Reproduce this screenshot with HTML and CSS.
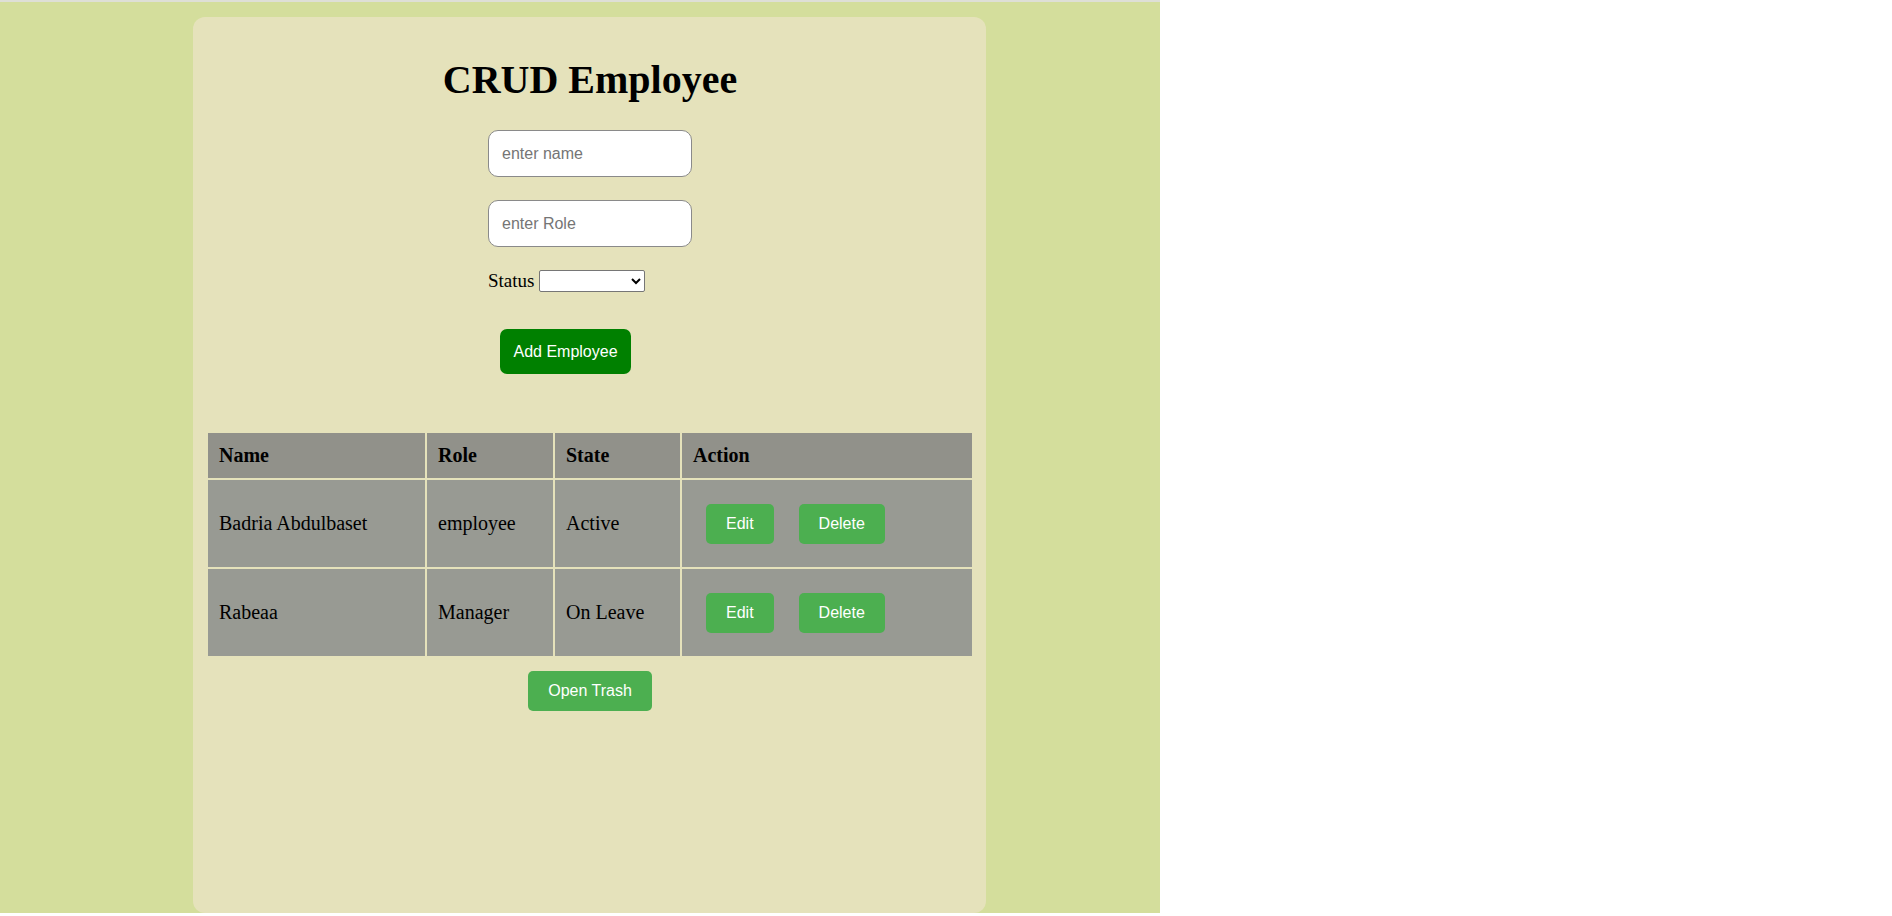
FILE: index.html
```html
<!DOCTYPE html>
<html>
<head>
<meta charset="utf-8">
<title>CRUD Employee</title>
<link rel="stylesheet" href="styles.css">
</head>
<body>
<div class="page">
  <div class="card">
    <h1 class="title">CRUD Employee</h1>
    <div class="form">
      <input class="field" type="text" placeholder="enter name">
      <input class="field" type="text" placeholder="enter Role">
      <div class="status-row">
        <label class="status-label">Status</label>
        <select class="status-select"><option></option><option>Active</option><option>On Leave</option></select>
      </div>
      <button class="add-btn">Add Employee</button>
    </div>
    <table class="emp-table">
      <thead>
        <tr>
          <th class="c-name">Name</th>
          <th class="c-role">Role</th>
          <th class="c-state">State</th>
          <th class="c-action">Action</th>
        </tr>
      </thead>
      <tbody>
        <tr>
          <td>Badria Abdulbaset</td>
          <td>employee</td>
          <td>Active</td>
          <td class="action-cell"><div class="actions"><button class="btn">Edit</button><button class="btn">Delete</button></div></td>
        </tr>
        <tr>
          <td>Rabeaa</td>
          <td>Manager</td>
          <td>On Leave</td>
          <td class="action-cell"><div class="actions"><button class="btn">Edit</button><button class="btn">Delete</button></div></td>
        </tr>
      </tbody>
    </table>
    <div class="trash-wrap"><button class="btn">Open Trash</button></div>
  </div>
</div>
</body>
</html>
```

FILE: styles.css
```css
html, body {
  margin: 0;
  padding: 0;
  background: #ffffff;
}
body {
  font-family: "Liberation Serif", "Times New Roman", serif;
  font-size: 20px;
  color: #000;
}
.page {
  width: 1160px;
  height: 911px;
  background: #d4de9c;
  border-top: 2px solid #dedfd6;
  display: flow-root;
}
.card {
  margin: 15px 0 0 193px;
  width: 793px;
  height: 896px;
  box-sizing: border-box;
  padding: 40px 12px 0 13px;
  background: #e5e2bb;
  border-radius: 12px;
}
.title {
  margin: 0;
  font-size: 40px;
  line-height: 46px;
  font-weight: bold;
  text-align: center;
}
.form {
  width: 204px;
  margin: 27px auto 0;
}
.field {
  display: block;
  box-sizing: border-box;
  width: 204px;
  height: 47px;
  margin: 0 0 23px;
  padding: 0 13px;
  border: 1px solid #8a8a8a;
  border-radius: 10px;
  background: #fff;
  font-family: "Liberation Sans", Arial, sans-serif;
  font-size: 16px;
  color: #000;
}
.field::placeholder {
  color: #757575;
}
.status-row {
  display: flex;
  align-items: center;
  gap: 5px;
  height: 22px;
}
.status-label {
  font-size: 19px;
}
.status-select {
  width: 106px;
  height: 22px;
  box-sizing: border-box;
  border: 1px solid #767676;
  border-radius: 2px;
  background: #fff;
  font-family: "Liberation Sans", Arial, sans-serif;
  font-size: 13px;
}
.add-btn {
  display: block;
  margin: 37px 0 0 12px;
  width: 131px;
  height: 45px;
  padding: 0;
  border: none;
  border-radius: 7px;
  background: #008000;
  color: #fff;
  font-family: "Liberation Sans", Arial, sans-serif;
  font-size: 16px;
}
.emp-table {
  margin-top: 57px;
  width: 768px;
  border-spacing: 2px;
  table-layout: fixed;
}
.emp-table th,
.emp-table td {
  box-sizing: border-box;
  text-align: left;
  padding: 0 11px;
  vertical-align: middle;
  line-height: 23px;
}
.emp-table th {
  height: 45px;
  background: #91918a;
  font-weight: bold;
}
.emp-table td {
  height: 87px;
  background: #989a93;
}
.c-name { width: 217px; }
.c-role { width: 126px; }
.c-state { width: 125px; }
.c-action { width: 290px; }
.emp-table td.action-cell {
  padding-left: 24px;
}
.actions {
  display: flex;
  gap: 25px;
}
.btn {
  height: 40px;
  padding: 0 20px;
  border: none;
  border-radius: 5px;
  background: #4caf50;
  color: #fff;
  font-family: "Liberation Sans", Arial, sans-serif;
  font-size: 16px;
}
.trash-wrap {
  margin-top: 13px;
  text-align: center;
}
```
